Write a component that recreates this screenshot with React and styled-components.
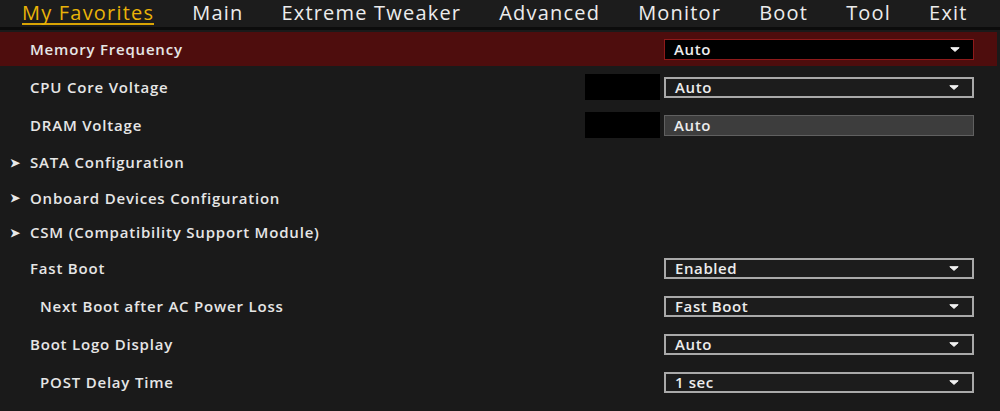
import styled, { createGlobalStyle } from 'styled-components';

const GlobalStyle = createGlobalStyle`
  html, body {
    margin: 0;
    padding: 0;
    background: #1a1a1a;
  }
  * { box-sizing: border-box; }
`;

const Screen = styled.div`
  width: 1000px;
  height: 411px;
  overflow: hidden;
  background: #1a1a1a;
  color: #e4e4e4;
  font-family: "Open Sans", "Noto Sans", sans-serif;
  font-weight: 600;
`;

const TabBar = styled.nav`
  height: 30px;
  display: flex;
  align-items: flex-start;
  gap: 38px;
  padding-left: 22px;
  background: #1c1c1c;
  border-bottom: 3px solid #0c0c0c;
`;

const Tab = styled.div`
  font-size: 20px;
  font-weight: 500;
  line-height: 20px;
  padding-top: 3px;
  color: ${p => (p.$active ? '#eab308' : '#ececec')};
  border-bottom: 2px solid ${p => (p.$active ? '#d9a404' : 'transparent')};
  letter-spacing: 1.2px;
  white-space: nowrap;
`;

const List = styled.div`
  display: flex;
  flex-direction: column;
`;

const Row = styled.div`
  height: ${p => p.$h}px;
  display: flex;
  align-items: center;
  padding-left: ${p => (p.$indent ? 40 : 10)}px;
  padding-right: ${p => (p.$selected ? 23 : 26)}px;
  background: ${p => (p.$selected ? '#4e0d0d' : 'transparent')};
  margin: ${p => (p.$selected ? '2px 3px 2px 0' : '0')};
`;

const Arrow = styled.span`
  width: 20px;
  font-size: 12px;
  color: #e8e8e8;
`;

const Label = styled.div`
  flex: 1;
  font-size: 15px;
  letter-spacing: 0.8px;
  padding-left: ${p => (p.$pad ? 20 : 0)}px;
  color: #e6e6e6;
  white-space: nowrap;
`;

const Readout = styled.div`
  width: 75px;
  height: 26px;
  background: #000;
  margin-right: 4px;
`;

const Select = styled.div`
  width: 310px;
  height: 21px;
  display: flex;
  align-items: center;
  justify-content: space-between;
  padding: 0 13px 0 9px;
  font-size: 15px;
  letter-spacing: 0.6px;
  color: #ececec;
  background: ${p => (p.$variant === 'focus' ? '#000' : p.$variant === 'disabled' ? '#3d3d3d' : '#1c1c1c')};
  border: ${p =>
    p.$variant === 'focus'
      ? '1.5px solid #8e1a1a'
      : p.$variant === 'disabled'
      ? '1px solid #606060'
      : '2px solid #a9a9a9'};
`;

const Caret = () => (
  <svg width="10" height="5" viewBox="0 0 10 5">
    <path d="M0.8 0.7 L9.2 0.7 L5 4.4 Z" fill="#f2f2f2" stroke="#f2f2f2" strokeWidth="1" strokeLinejoin="round" />
  </svg>
);

const tabs = ['My Favorites', 'Main', 'Extreme Tweaker', 'Advanced', 'Monitor', 'Boot', 'Tool', 'Exit'];

const items = [
  { label: 'Memory Frequency', h: 34, value: 'Auto', variant: 'focus', selected: true },
  { label: 'CPU Core Voltage', h: 38, value: 'Auto', readout: true },
  { label: 'DRAM Voltage', h: 38, value: 'Auto', readout: true, variant: 'disabled' },
  { label: 'SATA Configuration', h: 36, menu: true },
  { label: 'Onboard Devices Configuration', h: 35, menu: true },
  { label: 'CSM (Compatibility Support Module)', h: 34, menu: true },
  { label: 'Fast Boot', h: 38, value: 'Enabled' },
  { label: 'Next Boot after AC Power Loss', h: 38, value: 'Fast Boot', indent: true },
  { label: 'Boot Logo Display', h: 38, value: 'Auto' },
  { label: 'POST Delay Time', h: 38, value: '1 sec', indent: true },
];

export default function App() {
  return (
    <Screen>
      <GlobalStyle />
      <TabBar>
        {tabs.map((t, i) => (
          <Tab key={t} $active={i === 0}>{t}</Tab>
        ))}
      </TabBar>
      <List>
        {items.map(it => (
          <Row key={it.label} $h={it.h} $indent={it.indent} $selected={it.selected}>
            {it.menu && <Arrow>➤</Arrow>}
            <Label $pad={!it.menu && !it.indent}>{it.label}</Label>
            {it.readout && <Readout />}
            {it.value && (
              <Select $variant={it.variant}>
                <span>{it.value}</span>
                {it.variant !== 'disabled' && <Caret />}
              </Select>
            )}
          </Row>
        ))}
      </List>
    </Screen>
  );
}
